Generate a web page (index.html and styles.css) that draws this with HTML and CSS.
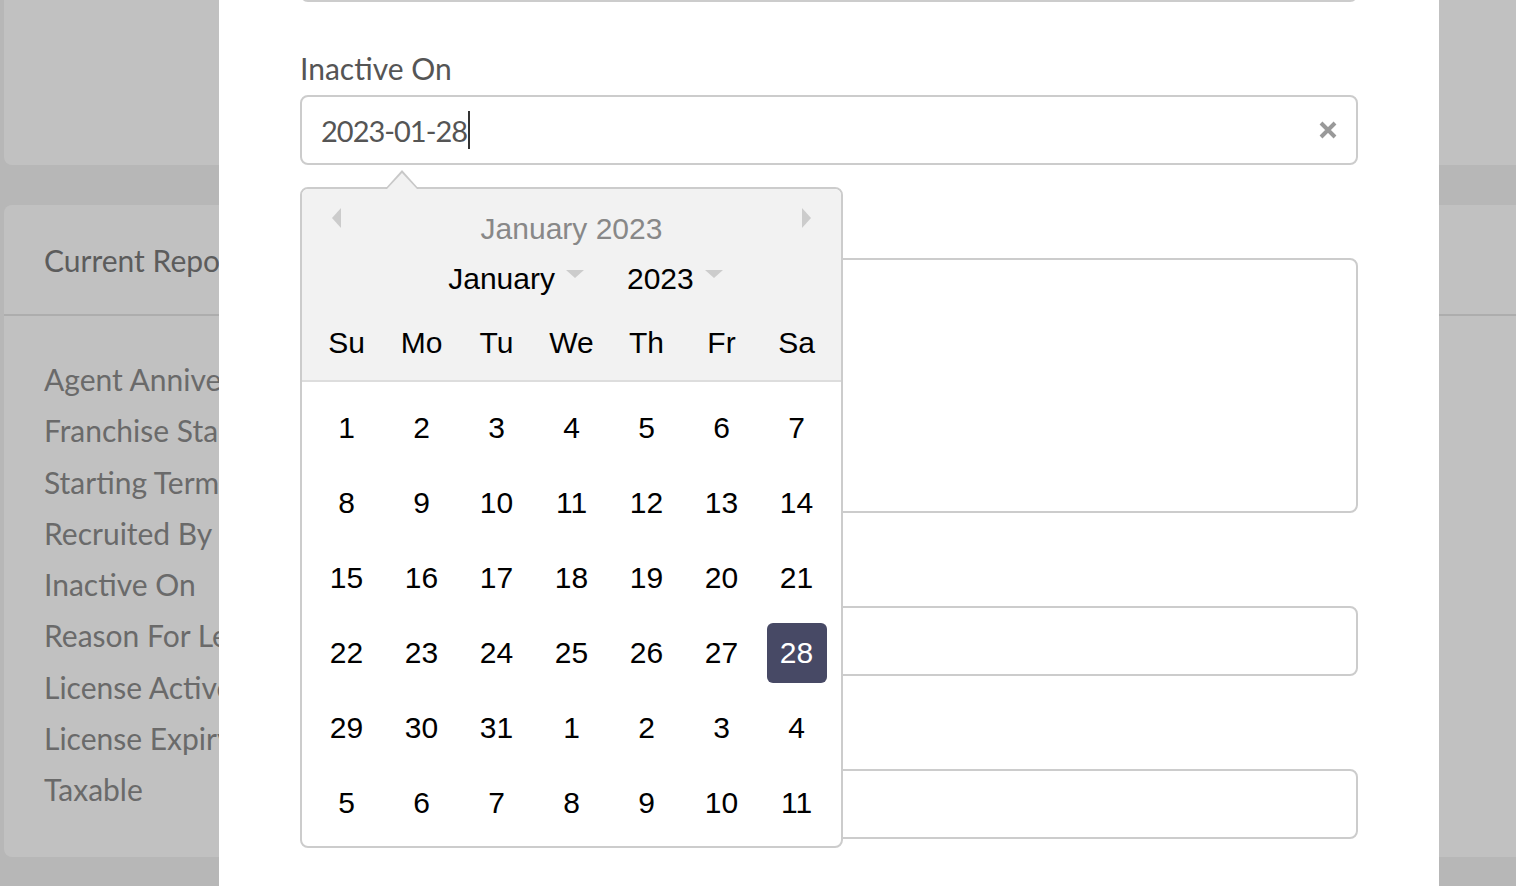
FILE: index.html
```html
<!DOCTYPE html>
<html lang="en">
<head>
<meta charset="utf-8">
<title>Inactive On</title>
<link rel="stylesheet" href="styles.css">
</head>
<body>
<div class="page">
  <div class="card card-top"></div>
  <div class="card card-report">
    <div class="card-head">Current Reporting Details</div>
    <ul class="fields">
      <li>Agent Anniversary</li>
      <li>Franchise Start Date</li>
      <li>Starting Term</li>
      <li>Recruited By</li>
      <li>Inactive On</li>
      <li>Reason For Leaving</li>
      <li>License Active Date</li>
      <li>License Expiry Date</li>
      <li>Taxable</li>
    </ul>
  </div>
</div>

<div class="modal">
  <div class="modal-body">
    <div class="group group-first"><div class="input"></div></div>

    <div class="group">
      <label class="label">Inactive On</label>
      <div class="input-wrap">
        <div class="input">
          <span class="value">2023-01-28</span><span class="text-caret"></span>
          <svg class="clear" width="18" height="18" viewBox="0 0 18 18"><path d="M2 2L16 16M16 2L2 16" stroke="#999" stroke-width="4" stroke-linecap="butt"/></svg>
        </div>
        <div class="datepicker">
          <div class="dp-head">
            <div class="dp-nav">
              <span class="arrow arrow-prev"></span>
              <span class="dp-title">January 2023</span>
              <span class="arrow arrow-next"></span>
            </div>
            <div class="dp-selects">
              <span class="dp-select">January</span>
              <span class="dp-select">2023</span>
            </div>
            <div class="dp-dow">
              <span>Su</span><span>Mo</span><span>Tu</span><span>We</span><span>Th</span><span>Fr</span><span>Sa</span>
            </div>
          </div>
          <div class="dp-body">
            <span class="day">1</span><span class="day">2</span><span class="day">3</span><span class="day">4</span><span class="day">5</span><span class="day">6</span><span class="day">7</span>
            <span class="day">8</span><span class="day">9</span><span class="day">10</span><span class="day">11</span><span class="day">12</span><span class="day">13</span><span class="day">14</span>
            <span class="day">15</span><span class="day">16</span><span class="day">17</span><span class="day">18</span><span class="day">19</span><span class="day">20</span><span class="day">21</span>
            <span class="day">22</span><span class="day">23</span><span class="day">24</span><span class="day">25</span><span class="day">26</span><span class="day">27</span><span class="day selected">28</span>
            <span class="day">29</span><span class="day">30</span><span class="day">31</span><span class="day other">1</span><span class="day other">2</span><span class="day other">3</span><span class="day other">4</span>
            <span class="day other">5</span><span class="day other">6</span><span class="day other">7</span><span class="day other">8</span><span class="day other">9</span><span class="day other">10</span><span class="day other">11</span>
          </div>
        </div>
      </div>
    </div>

    <div class="group">
      <div class="label"></div>
      <div class="textarea"></div>
    </div>

    <div class="group">
      <div class="label"></div>
      <div class="input"></div>
    </div>

    <div class="group">
      <div class="label"></div>
      <div class="input"></div>
    </div>
  </div>
</div>
</body>
</html>
```

FILE: styles.css
```css
html, body {
  margin: 0;
  padding: 0;
}
body {
  width: 1516px;
  height: 886px;
  overflow: hidden;
  background: #b7b7b7;
  font-family: Lato, "Open Sans", sans-serif;
}

/* background page (dimmed) */
.page {
  display: flex;
  flex-direction: column;
  gap: 40px;
  padding-left: 4px;
  margin-top: -40px;
}
.card {
  background: #c1c1c1;
  border-radius: 8px;
  margin-right: -20px;
}
.card-top {
  height: 205px;
}
.card-head {
  height: 109px;
  border-bottom: 2px solid #adadad;
  display: flex;
  align-items: center;
  padding-left: 40px;
  font-size: 30px;
  color: #5c5c5c;
  white-space: nowrap;
}
.fields {
  list-style: none;
  margin: 0;
  padding: 38px 0 41px 40px;
  font-size: 30px;
  line-height: 51.3px;
  color: #6a6a6a;
  white-space: nowrap;
}

/* modal */
.modal {
  position: fixed;
  top: 0;
  left: 219px;
  width: 1220px;
  height: 886px;
  background: #fff;
}
.modal-body {
  padding: 0 81px;
}
.group {
  margin-bottom: 46px;
}
.group-first {
  margin-top: -68px;
}
.label {
  display: block;
  height: 40px;
  line-height: 40px;
  margin-bottom: 7px;
  font-size: 30px;
  color: #555;
}
.input-wrap {
  position: relative;
}
.input {
  height: 70px;
  box-sizing: border-box;
  border: 2px solid #ccc;
  border-radius: 8px;
  display: flex;
  align-items: center;
  padding: 0 19px;
  font-size: 30px;
  color: #555;
}
.value {
  font-size: 29px;
  letter-spacing: -1px;
}
.text-caret {
  display: inline-block;
  width: 2px;
  height: 38px;
  background: #333;
  margin-left: 1px;
}
.clear {
  margin-left: auto;
}
.textarea {
  height: 255px;
  box-sizing: border-box;
  border: 2px solid #ccc;
  border-radius: 8px;
}

/* datepicker */
.datepicker {
  position: absolute;
  top: calc(100% + 22px);
  left: 0;
  width: 543px;
  box-sizing: border-box;
  border: 2px solid #ccc;
  border-radius: 8px;
  background: #fff;
  font-family: "Liberation Sans", Arial, sans-serif;
  color: #000;
}
.datepicker::before {
  content: "";
  position: absolute;
  top: -19px;
  left: 83px;
  border-left: 17px solid transparent;
  border-right: 17px solid transparent;
  border-bottom: 19px solid #c8c8c8;
}
.datepicker::after {
  content: "";
  position: absolute;
  top: -16px;
  left: 85px;
  border-left: 15px solid transparent;
  border-right: 15px solid transparent;
  border-bottom: 16px solid #f2f2f2;
}
.dp-head {
  background: #f2f2f2;
  border-bottom: 2px solid #ddd;
  border-radius: 6px 6px 0 0;
  padding: 20px 7px 17px;
}
.dp-nav {
  display: flex;
  justify-content: space-between;
  align-items: flex-start;
  padding: 0 23px;
}
.dp-title {
  font-size: 30px;
  line-height: 40px;
  color: #888;
}
.arrow {
  width: 0;
  height: 0;
  border-top: 10px solid transparent;
  border-bottom: 10px solid transparent;
  margin-top: -1px;
}
.arrow-prev {
  border-right: 9px solid #ccc;
}
.arrow-next {
  border-left: 9px solid #ccc;
}
.dp-selects {
  display: flex;
  justify-content: center;
  gap: 43px;
  margin-top: 10px;
  padding-left: 28px;
  font-size: 30px;
  line-height: 40px;
}
.dp-select {
  display: flex;
  align-items: flex-start;
}
.dp-select::after {
  content: "";
  border-left: 9px solid transparent;
  border-right: 9px solid transparent;
  border-top: 8px solid #ccc;
  margin-left: 11px;
  margin-top: 11px;
}
.dp-dow {
  display: grid;
  grid-template-columns: repeat(7, 75px);
  margin-top: 24px;
  font-size: 30px;
  line-height: 40px;
  text-align: center;
}
.dp-body {
  display: grid;
  grid-template-columns: repeat(7, 75px);
  grid-auto-rows: 75px;
  place-items: center;
  padding: 8.5px 7px 5.5px;
}
.day {
  width: 60px;
  height: 60px;
  display: flex;
  align-items: center;
  justify-content: center;
  font-size: 30px;
  border-radius: 6px;
}
.day.selected {
  background: #474965;
  color: #fff;
}
```
